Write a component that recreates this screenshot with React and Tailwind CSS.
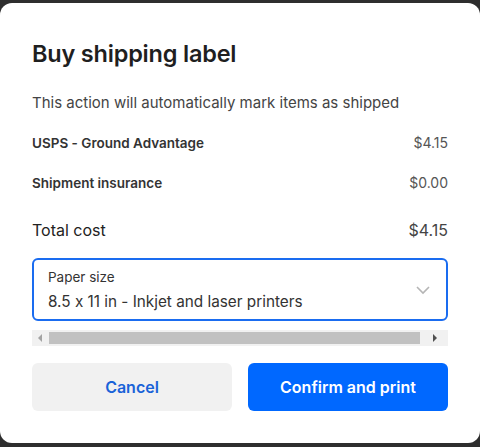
export default function App() {
  return (
    <div className="w-[480px] h-[447px] bg-[#2e2e2e] pt-[3px] pb-[4px] [font-variant-ligatures:no-contextual]" style={{ fontFamily: 'Inter, "Noto Sans", sans-serif' }}>
      <div className="h-full bg-white rounded-[12px] px-8 pt-[36px] flex flex-col text-[#222]">
        <h1 className="text-[23.5px] leading-[30px] font-semibold text-[#1f1f1f] tracking-[-0.2px]">Buy shipping label</h1>
        <p className="mt-[24px] text-[15px] leading-[20px] text-[#444]">This action will automatically mark items as shipped</p>
        <div className="mt-[21px] flex justify-between items-center leading-[18px]">
          <span className="text-[13.5px] font-semibold text-[#333]">USPS - Ground Advantage</span>
          <span className="text-[14px] text-[#555]">$4.15</span>
        </div>
        <div className="mt-[22px] flex justify-between items-center leading-[18px]">
          <span className="text-[13.5px] font-semibold text-[#333]">Shipment insurance</span>
          <span className="text-[14px] text-[#555]">$0.00</span>
        </div>
        <div className="mt-[27px] flex justify-between items-center text-[16px] leading-[22px] text-[#222] font-normal">
          <span>Total cost</span>
          <span className="font-normal text-[#444]">$4.15</span>
        </div>
        <div className="mt-[17px] h-[63px] border-2 border-[#1a6cf0] rounded-[6px] flex items-center justify-between pl-[14px] pr-[14px]">
          <div className="flex flex-col">
            <span className="text-[13.5px] leading-[18px] text-[#333]">Paper size</span>
            <span className="mt-[6px] text-[15.3px] leading-[20px] text-[#333]">8.5 x 11 in - Inkjet and laser printers</span>
          </div>
          <svg width="16" height="10" viewBox="0 0 16 10" className="mr-[1px]">
            <path d="M2 2 L8 8 L14 2" fill="none" stroke="#b5b5b5" strokeWidth="1.6" />
          </svg>
        </div>
        <div className="mt-[9px] h-[16px] bg-[#f1f1f1] flex items-center">
          <div className="w-[17px] flex justify-center">
            <svg width="5" height="8" viewBox="0 0 5 8"><path d="M4 0 L0 4 L4 8 Z" fill="#a3a3a3" /></svg>
          </div>
          <div className="h-[12px] w-[371px] bg-[#c1c1c1]" />
          <div className="flex-1 flex justify-center">
            <svg width="5" height="8" viewBox="0 0 5 8"><path d="M1 0 L5 4 L1 8 Z" fill="#505050" /></svg>
          </div>
        </div>
        <div className="mt-[17px] grid grid-cols-2 gap-4">
          <button className="h-[48px] rounded-[6px] bg-[#f1f1f1] text-[#1a63d8] text-[16px] font-semibold">Cancel</button>
          <button className="h-[48px] rounded-[6px] bg-[#0068ff] text-white text-[16px] font-semibold">Confirm and print</button>
        </div>
      </div>
    </div>
  );
}
